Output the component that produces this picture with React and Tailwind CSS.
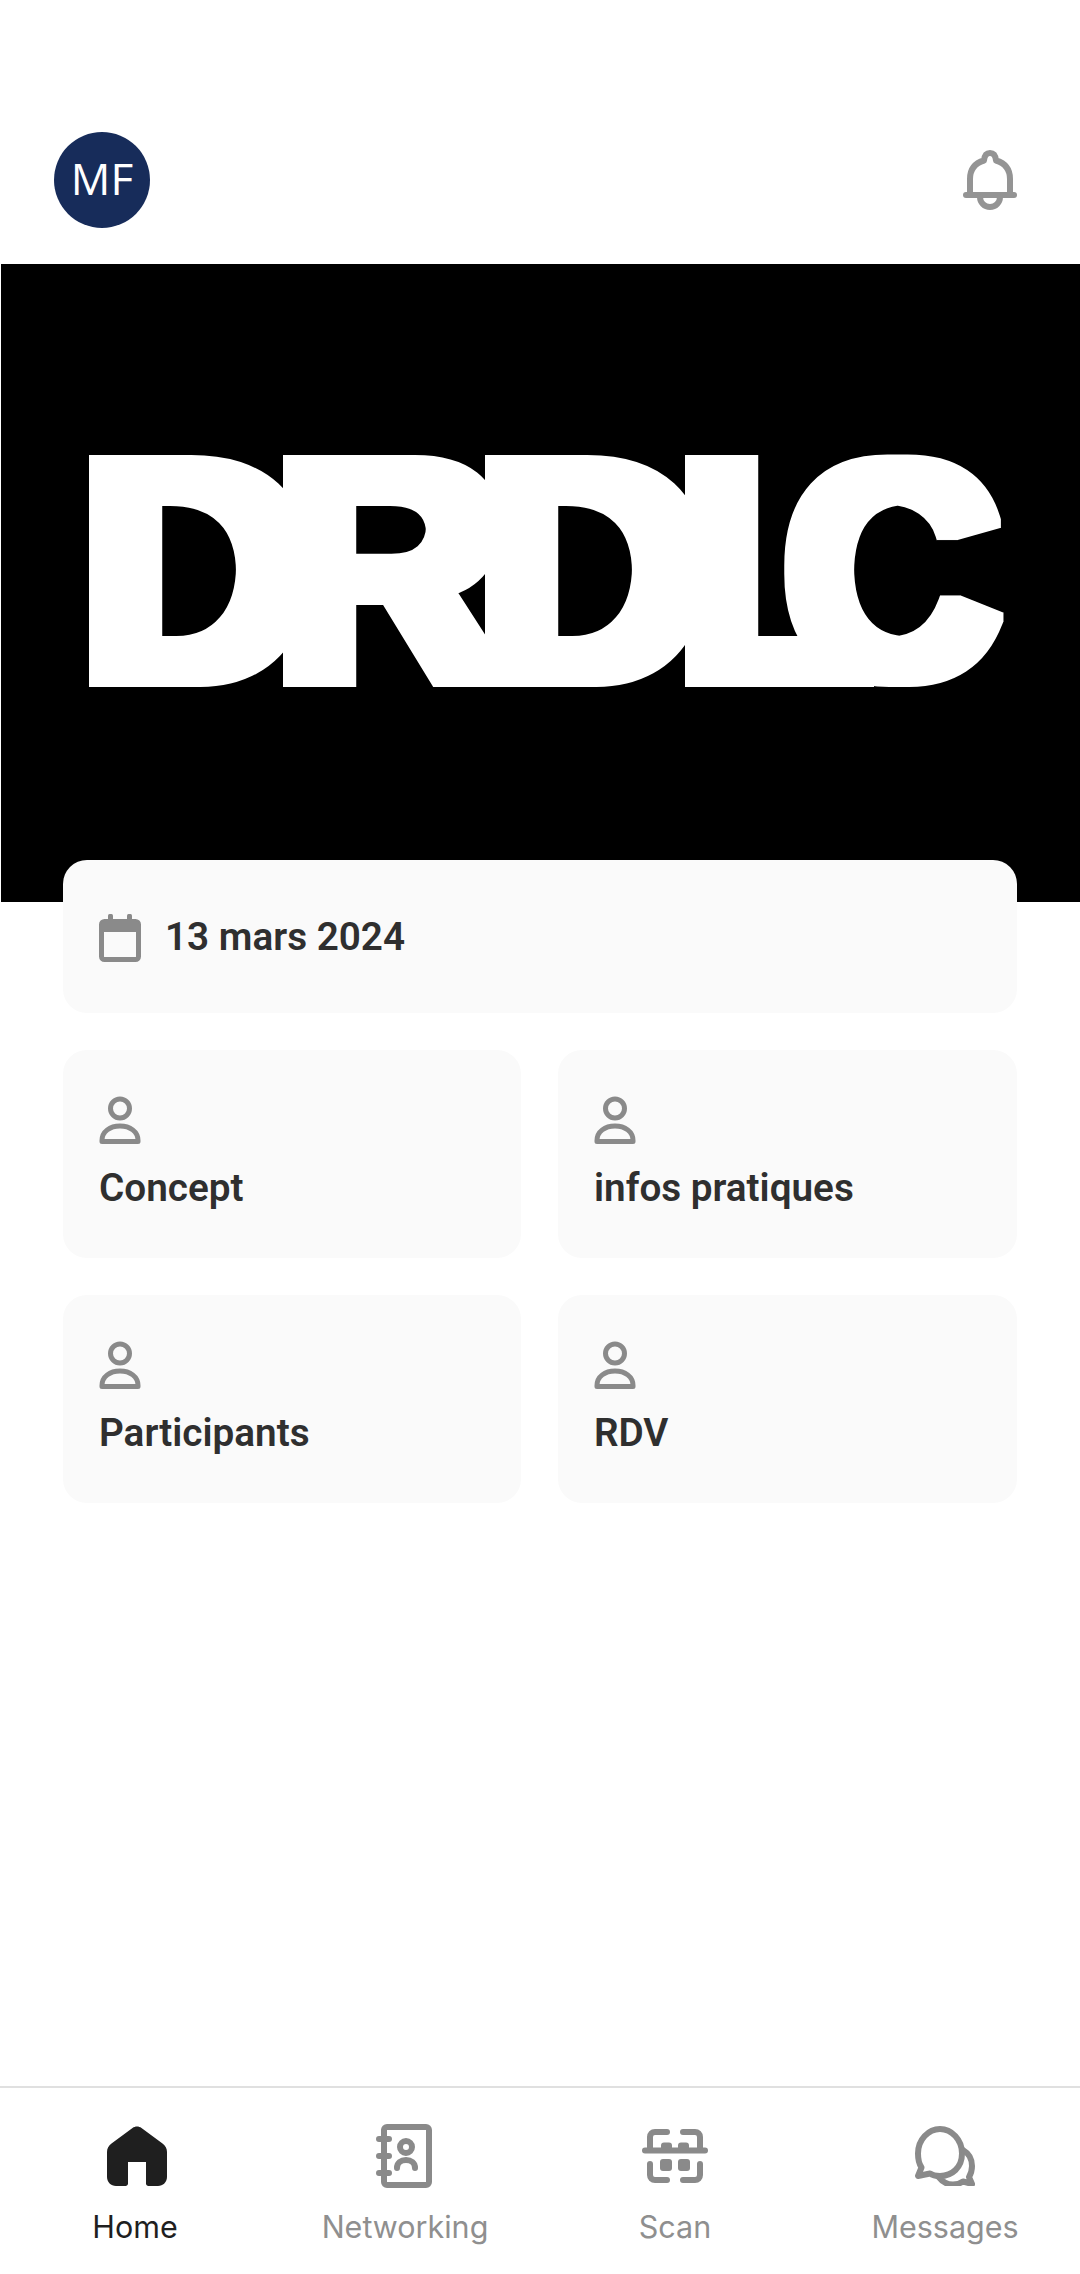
import React from 'react';

const PersonIcon = () => (
  <svg width="42" height="48" viewBox="0 0 42 48" fill="none" stroke="#8a8a8a" strokeWidth="5">
    <circle cx="21" cy="12.500" r="9.500" />
    <path d="M3 45.500v-1C3 35.500 11 30 21 30s18 5.500 18 14.500v1z" strokeLinejoin="round" />
  </svg>
);

const CalendarIcon = () => (
  <svg width="42" height="48" viewBox="0 0 42 48" fill="none">
    <rect x="9" y="0" width="5" height="8" rx="1.500" fill="#8a8a8a" />
    <rect x="28" y="0" width="5" height="8" rx="1.500" fill="#8a8a8a" />
    <rect x="2.500" y="7.500" width="37" height="38" rx="3" stroke="#8a8a8a" strokeWidth="5" />
    <path d="M2 10a3 3 0 0 1 3-3h32a3 3 0 0 1 3 3v8H2z" fill="#8a8a8a" />
  </svg>
);

const BellIcon = () => (
  <svg width="54" height="60" viewBox="0 0 54 60" fill="none" stroke="#949494" strokeWidth="6" strokeLinecap="round" strokeLinejoin="round">
    <path d="M7 44V29C7 19 12.500 13 21 10.500 21.500 5 24 3 27 3s5.500 2 6 7.500C41.500 13 47 19 47 29v15" />
    <path d="M3 45h48" />
    <path d="M17 47a10 10 0 0 0 20 0" />
  </svg>
);

const HomeIcon = () => (
  <svg width="60" height="60" viewBox="0 0 60 60">
    <path d="M25.500 2c2.700-2 6.300-2 9 0l21 15.500c2.900 2.100 4.500 5 4.500 8.500v25c0 5-4 9-9 9H41.500c-1.400 0-2.500-1.100-2.500-2.500V36H21v21.500c0 1.400-1.100 2.500-2.500 2.500H9c-5 0-9-4-9-9V26c0-3.500 1.600-6.400 4.500-8.500z" fill="#1f1f1f" />
  </svg>
);

const NetworkingIcon = () => (
  <svg width="56" height="64" viewBox="0 0 56 64" fill="none" stroke="#8a8a8a" strokeWidth="6" strokeLinecap="round">
    <rect x="8" y="3" width="45" height="58" rx="3" />
    <path d="M3 15h10M3 32h10M3 49h10" />
    <circle cx="30" cy="23" r="6" />
    <path d="M21 44c0-5 4-8 9-8s9 3 9 8" />
  </svg>
);

const ScanIcon = () => (
  <svg width="66" height="54" viewBox="0 0 66 54" fill="none" stroke="#8a8a8a" strokeWidth="6" strokeLinecap="round">
    <path d="M25 3H13c-3 0-5 2-5 5V20M41 3h12c3 0 5 2 5 5V20" />
    <path d="M3 21.500h60" />
    <path d="M8 35v11c0 3 2 5 5 5h12M58 35v11c0 3-2 5-5 5H41" />
    <path d="M19 20v-3.500a3 3 0 0 1 3-3h5a3 3 0 0 1 3 3V20h-11zM36 20v-3.500a3 3 0 0 1 3-3h5a3 3 0 0 1 3 3V20h-11z" fill="#8a8a8a" stroke="none" />
    <rect x="18" y="30" width="12" height="12" rx="3" fill="#8a8a8a" stroke="none" />
    <rect x="36" y="30" width="12" height="12" rx="3" fill="#8a8a8a" stroke="none" />
  </svg>
);

const MessagesIcon = () => (
  <svg width="60" height="60" viewBox="0 0 60 60" fill="none" stroke="#8a8a8a" strokeWidth="6" strokeLinejoin="round" strokeLinecap="round">
    <path d="M3 50l3.500-8.500C3.800 37.500 3 32.500 3 27.500 3 13.500 13.500 3 25 3s22 10.500 22 24.500S37 50 25 50c-5 0-8-1-10-2.500z" />
    <path d="M48 24c6 3.500 9 9.500 9 16 0 4.500-1.500 8.500-3 11l3 7-9-2.500c-3 2-7 3-10 3-6 0-11-3-14-7" />
  </svg>
);

const cards = ['Concept', 'infos pratiques', 'Participants', 'RDV'];

const tabs = [
  { label: 'Home', icon: <div className="ml-[3px]"><HomeIcon /></div>, active: true },
  { label: 'Networking', icon: <div className="-ml-[3px]"><NetworkingIcon /></div> },
  { label: 'Scan', icon: <ScanIcon /> },
  { label: 'Messages', icon: <MessagesIcon /> },
];

export default function App() {
  return (
    <div className="flex h-[2274px] w-[1080px] flex-col overflow-hidden bg-white font-['Roboto',sans-serif]">
      <header className="flex h-[264px] items-end justify-between pb-[36px] pl-[54px] pr-[63px]">
        <div className="flex size-[96px] items-center justify-center rounded-full bg-[#172c5a] pb-[4px] font-['Open_Sans',sans-serif] text-[44px] text-white">
          MF
        </div>
        <div className="mb-[18px] flex"><BellIcon /></div>
      </header>

      <div className="ml-[1px] h-[638px] bg-black">
        <svg width="1079" height="638" viewBox="0 0 1079 638" aria-label="DRDLC">
          <defs>
            <filter id="heavy" filterUnits="userSpaceOnUse" x="-100" y="-100" width="1400" height="900">
              <feMorphology operator="dilate" radius="10 4" />
            </filter>
          </defs>
          <g
            fill="#fff"
            stroke="#fff"
            strokeWidth="8"
            filter="url(#heavy)"
            fontFamily="'Liberation Sans', sans-serif"
            fontWeight="700"
            fontSize="314"
          >
            <text y="415" x="81 275 477 677">DRDL</text>
            {/* the C is narrower than the font's, squeezed around its left edge */}
            <text transform="translate(785 300) scale(0.93 0.975)" y="115" x="0">C</text>
          </g>
        </svg>
      </div>

      <main className="-mt-[42px] flex flex-col gap-[37px] px-[63px]">
        <div className="flex h-[153px] gap-[24px] rounded-[24px] bg-[#fafafa] pl-[36px] pt-[54px]">
          <CalendarIcon />
          <span className="text-[38.7px] font-semibold leading-[46px] text-[#2f2f2f]">13 mars 2024</span>
        </div>
        <div className="grid grid-cols-[458px_459px] gap-[37px]">
          {cards.map((title) => (
            <div key={title} className="flex h-[208px] flex-col rounded-[24px] bg-[#fafafa] pl-[36px] pt-[46px]">
              <PersonIcon />
              <span className="mt-[21px] text-[38.7px] font-semibold leading-[46px] text-[#2f2f2f]">{title}</span>
            </div>
          ))}
        </div>
      </main>

      <nav className="mt-auto grid h-[188px] grid-cols-4 border-t-2 border-[#e0e0e0] font-['Inter',sans-serif]">
        {tabs.map((tab) => (
          <div key={tab.label} className="flex flex-col items-center">
            <div className="mt-[36px] flex h-[64px] items-center">{tab.icon}</div>
            <span className={`mt-[21px] text-[30.500px] leading-[36px] ${tab.active ? 'text-[#1f1f1f]' : 'text-[#8f8f8f]'}`}>
              {tab.label}
            </span>
          </div>
        ))}
      </nav>
    </div>
  );
}
